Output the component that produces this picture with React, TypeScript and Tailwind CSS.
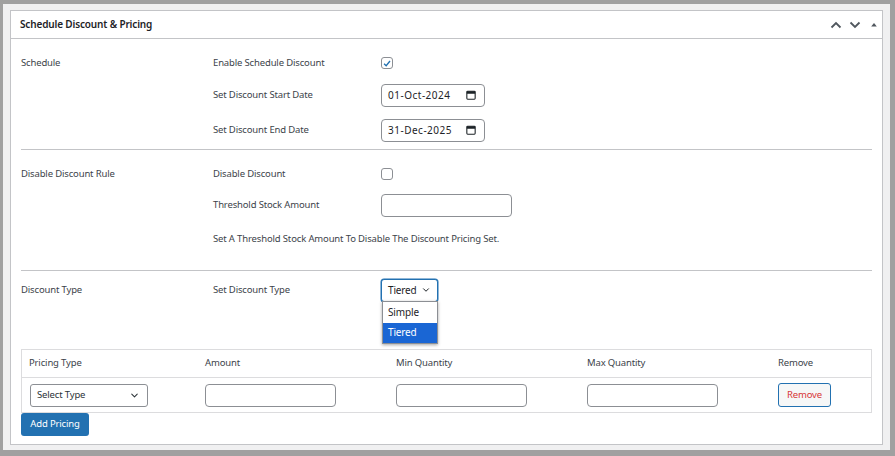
import { ChevronDown } from 'lucide-react'

const font = { fontFamily: '"Noto Sans", "Open Sans", sans-serif' }

const Checkbox = ({ checked }: { checked?: boolean }) => (
  <div className="flex h-[12px] w-[12px] items-center justify-center rounded-[3px] border border-[#8c8f94] bg-white">
    {checked && (
      <svg viewBox="0 0 12 12" className="h-[11px] w-[11px]">
        <path d="M2.5 6.2 L5 8.6 L9.6 3" fill="none" stroke="#2271b1" strokeWidth="1.6" />
      </svg>
    )}
  </div>
)

const Calendar = () => (
  <svg viewBox="0 0 12 12" className="h-[10px] w-[10px]">
    <rect x="1" y="1.5" width="10" height="9.5" rx="1" fill="none" stroke="#1d2327" strokeWidth="1.3" />
    <rect x="1" y="1.5" width="10" height="3" fill="#1d2327" />
  </svg>
)

const DateBox = ({ value }: { value: string }) => (
  <div className="flex h-[23px] w-[104px] items-center justify-between rounded-[4px] border border-[#8c8f94] bg-white pl-[6px] pr-[8px] text-[10px] tracking-[0.5px] text-[#1d2327]">
    <span>{value}</span>
    <Calendar />
  </div>
)

const Input = ({ w }: { w: string }) => (
  <div className={`h-[23px] rounded-[4px] border border-[#8c8f94] bg-white ${w}`} />
)

const Chevron = ({ up }: { up?: boolean }) => (
  <svg viewBox="0 0 12 8" className="h-[8px] w-[12px]">
    <path
      d={up ? 'M1.5 6.5 L6 2 L10.5 6.5' : 'M1.5 1.5 L6 6 L10.5 1.5'}
      fill="none"
      stroke="#50575e"
      strokeWidth="1.8"
    />
  </svg>
)

const Row = ({
  left,
  label,
  children,
  className,
}: {
  left?: string
  label: string
  children?: React.ReactNode
  className?: string
}) => (
  <div className={`flex h-[22px] items-center ${className ?? ''}`}>
    <div className="w-[192px]">{left}</div>
    <div className="w-[168px]">{label}</div>
    <div className="flex items-center">{children}</div>
  </div>
)

export default function App() {
  return (
    <div
      className="h-[456px] w-[895px] bg-[#a0a0a0] pb-[6px] pl-[3px] pr-[5px] pt-[4px] text-[9.5px] tracking-[-0.15px] text-[#3c434a]"
      style={font}
    >
      <div className="h-full bg-[#f0f0f1] pb-[5px] pl-[7px] pr-[7px] pt-[6px]">
        <div className="h-full border border-[#c3c4c7] bg-white">
          <div className="flex h-[28px] items-center justify-between border-b border-[#c3c4c7] pl-[9px] pr-[4px]">
            <span className="text-[10px] font-semibold text-[#1d2327]">
              Schedule Discount &amp; Pricing
            </span>
            <div className="flex items-center gap-[7px]">
              <Chevron up />
              <Chevron />
              <svg viewBox="0 0 10 10" className="ml-[2px] h-[8px] w-[8px]">
                <path d="M1.5 7 L5 2.5 L8.5 7 Z" fill="#50575e" />
              </svg>
            </div>
          </div>

          <div className="px-[10px]">
            {/* schedule */}
            <div className="border-b border-[#c3c4c7] pb-[8px] pt-[13px]">
              <Row left="Schedule" label="Enable Schedule Discount">
                <Checkbox checked />
              </Row>
              <Row label="Set Discount Start Date" className="mt-[10px]">
                <DateBox value="01-Oct-2024" />
              </Row>
              <Row label="Set Discount End Date" className="mt-[13px]">
                <DateBox value="31-Dec-2025" />
              </Row>
            </div>

            {/* disable */}
            <div className="border-b border-[#c3c4c7] pb-[20px] pt-[13px]">
              <Row left="Disable Discount Rule" label="Disable Discount">
                <Checkbox />
              </Row>
              <Row label="Threshold Stock Amount" className="mt-[9px]">
                <Input w="w-[131px]" />
              </Row>
              <div className="mt-[12px] flex h-[22px] items-center pl-[192px]">
                Set A Threshold Stock Amount To Disable The Discount Pricing Set.
              </div>
            </div>

            {/* type */}
            <div className="pb-[48px] pt-[8px]">
              <Row left="Discount Type" label="Set Discount Type">
                <div className="relative">
                  <div className="flex h-[23px] w-[57px] items-center justify-between rounded-[3px] border border-[#2271b1] bg-white pl-[6px] pr-[6px] text-[10px] text-[#1d2327] shadow-[0_0_0_0.5px_#2271b1]">
                    <span>Tiered</span>
                    <ChevronDown size={10} strokeWidth={2.4} />
                  </div>
                  <div className="absolute left-[1px] top-[22px] z-10 w-[56px] border border-[#8c8f94] bg-white text-[10px] text-[#1d2327] shadow-[0_1px_3px_rgba(0,0,0,0.35)]">
                    <div className="flex h-[21px] items-center pl-[5px]">Simple</div>
                    <div className="flex h-[20px] items-center bg-[#1a66d4] pl-[5px] text-white">
                      Tiered
                    </div>
                  </div>
                </div>
              </Row>
            </div>

            {/* table */}
            <div className="border border-[#dcdcde]">
              <div className="flex h-[28px] items-center border-b border-[#dcdcde] text-[#3c434a]">
                <div className="w-[176px] pl-[7px]">Pricing Type</div>
                <div className="w-[191px] pl-[7px]">Amount</div>
                <div className="w-[191px] pl-[7px]">Min Quantity</div>
                <div className="w-[191px] pl-[7px]">Max Quantity</div>
                <div className="pl-[7px]">Remove</div>
              </div>
              <div className="flex h-[34px] items-center">
                <div className="w-[176px] pl-[8px]">
                  <div className="flex h-[23px] w-[118px] items-center justify-between rounded-[3px] border border-[#8c8f94] bg-white pl-[6px] pr-[7px] text-[#2c3338]">
                    <span>Select Type</span>
                    <ChevronDown size={11} strokeWidth={2.2} />
                  </div>
                </div>
                <div className="w-[191px] pl-[7px]">
                  <Input w="w-[131px]" />
                </div>
                <div className="w-[191px] pl-[7px]">
                  <Input w="w-[131px]" />
                </div>
                <div className="w-[191px] pl-[7px]">
                  <Input w="w-[131px]" />
                </div>
                <div className="pl-[7px]">
                  <div className="flex h-[24px] w-[53px] items-center justify-center rounded-[3px] border border-[#2271b1] bg-[#f6f7f7] text-[#d63638]">
                    Remove
                  </div>
                </div>
              </div>
            </div>
            <div className="flex h-[23px] w-[68px] items-center justify-center rounded-[3px] bg-[#2271b1] text-white">
              Add Pricing
            </div>
          </div>
        </div>
      </div>
    </div>
  )
}
